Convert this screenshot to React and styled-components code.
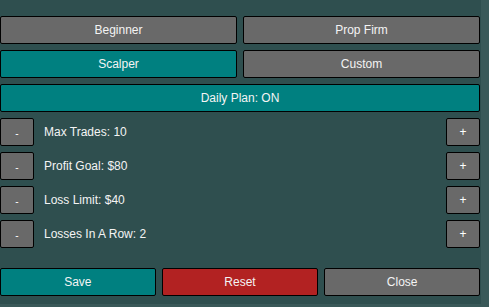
import React, { useState } from 'react';
import styled, { createGlobalStyle } from 'styled-components';

const GlobalStyle = createGlobalStyle`
  html, body {
    margin: 0;
    padding: 0;
    background-color: #3a5959;
  }
  * {
    box-sizing: border-box;
  }
`;

const Panel = styled.div`
  width: 481px;
  height: 304px;
  background-color: #2f4f4f;
  padding-top: 16px;
  font-family: "Liberation Sans", Arial, sans-serif;
  font-size: 12px;
  color: #f4f4f4;
`;

const Content = styled.div`
  width: 480px;
  display: flex;
  flex-direction: column;
  gap: 6px;
`;

const ButtonRow = styled.div`
  display: grid;
  grid-template-columns: repeat(${props => props.$cols}, 1fr);
  gap: ${props => props.$gap || 6}px;
`;

const colors = {
  gray: '#696969',
  teal: '#008080',
  red: '#b22222',
};

const Button = styled.button`
  height: 28px;
  width: 100%;
  background-color: ${props => colors[props.$variant || 'gray']};
  color: #f4f4f4;
  border: 1px solid #000;
  border-radius: 2px;
  font-family: "Liberation Sans", Arial, sans-serif;
  font-size: 12px;
  padding: 0;
  cursor: pointer;
`;

const StepperRow = styled.div`
  display: flex;
  align-items: center;
  height: 28px;
`;

const StepButton = styled.button`
  width: 34px;
  height: 28px;
  flex-shrink: 0;
  background-color: #696969;
  color: #fff;
  border: 1px solid #000;
  border-radius: 2px;
  font-family: "Liberation Sans", Arial, sans-serif;
  font-size: ${props => (props.$minus ? '10px' : '12px')};
  padding: ${props => (props.$minus ? '3px 0 0' : '0')};
  cursor: pointer;
`;

const StepLabel = styled.span`
  flex: 1;
  margin-left: 10px;
  font-size: 12px;
`;

const Footer = styled.div`
  margin-top: 14px;
`;

const profiles = ['Beginner', 'Prop Firm', 'Scalper', 'Custom'];

const App = () => {
  const [profile, setProfile] = useState('Scalper');
  const [dailyPlan, setDailyPlan] = useState(true);
  const [settings, setSettings] = useState({
    maxTrades: 10,
    profitGoal: 80,
    lossLimit: 40,
    lossesInRow: 2,
  });

  const steppers = [
    { key: 'maxTrades', label: 'Max Trades', fmt: v => v, step: 1 },
    { key: 'profitGoal', label: 'Profit Goal', fmt: v => `$${v}`, step: 10 },
    { key: 'lossLimit', label: 'Loss Limit', fmt: v => `$${v}`, step: 10 },
    { key: 'lossesInRow', label: 'Losses In A Row', fmt: v => v, step: 1 },
  ];

  const change = (key, delta) => {
    setSettings(s => ({ ...s, [key]: Math.max(0, s[key] + delta) }));
  };

  return (
    <>
      <GlobalStyle />
      <Panel>
        <Content>
          <ButtonRow $cols={2}>
            {profiles.slice(0, 2).map(p => (
              <Button key={p} $variant={profile === p ? 'teal' : 'gray'} onClick={() => setProfile(p)}>
                {p}
              </Button>
            ))}
          </ButtonRow>
          <ButtonRow $cols={2}>
            {profiles.slice(2).map(p => (
              <Button key={p} $variant={profile === p ? 'teal' : 'gray'} onClick={() => setProfile(p)}>
                {p}
              </Button>
            ))}
          </ButtonRow>
          <Button $variant={dailyPlan ? 'teal' : 'gray'} onClick={() => setDailyPlan(!dailyPlan)}>
            Daily Plan: {dailyPlan ? 'ON' : 'OFF'}
          </Button>

          {steppers.map(s => (
            <StepperRow key={s.key}>
              <StepButton $minus onClick={() => change(s.key, -s.step)}>-</StepButton>
              <StepLabel>
                {s.label}: {s.fmt(settings[s.key])}
              </StepLabel>
              <StepButton onClick={() => change(s.key, s.step)}>+</StepButton>
            </StepperRow>
          ))}

          <Footer>
            <ButtonRow $cols={3} $gap={6.5}>
              <Button $variant="teal">Save</Button>
              <Button $variant="red">Reset</Button>
              <Button>Close</Button>
            </ButtonRow>
          </Footer>
        </Content>
      </Panel>
    </>
  );
};

export default App;
